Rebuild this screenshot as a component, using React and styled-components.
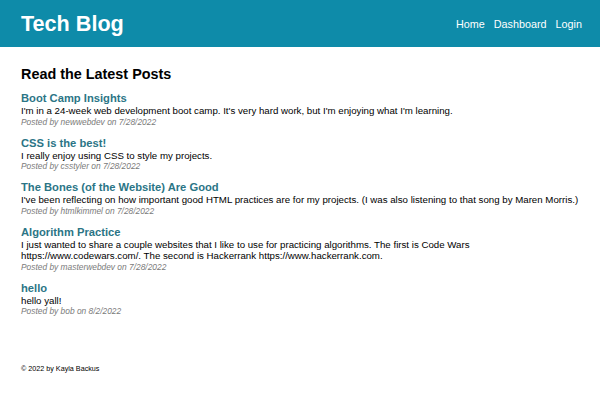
import React from 'react';
import styled, { createGlobalStyle } from 'styled-components';

const GlobalStyle = createGlobalStyle`
  html, body {
    margin: 0;
    padding: 0;
    background: #ffffff;
  }

  body {
    font-family: 'Liberation Sans', Arial, Helvetica, sans-serif;
    color: #000000;
  }
`;

const Page = styled.div`
  width: 600px;
  height: 400px;
  display: flex;
  flex-direction: column;
`;

const Header = styled.header`
  height: 47px;
  background-color: #0e8ba9;

  display: flex;
  align-items: center;
  justify-content: space-between;

  padding: 0 18px 0 21px;
`;

const SiteTitle = styled.h1`
  margin: 0;
  color: #ffffff;
  font-size: 21.6px;
  font-weight: 700;
`;

const Nav = styled.nav`
  display: flex;
  gap: 9px;
`;

const NavLink = styled.a`
  color: #ffffff;
  font-size: 10.8px;
  text-decoration: none;
`;

const Main = styled.main`
  flex: 1;
  padding: 19px 21px 0;
`;

const Heading = styled.h2`
  margin: 0 0 10px;
  font-size: 14.4px;
  font-weight: 700;
`;

const PostList = styled.div`
  display: flex;
  flex-direction: column;
  gap: 8.5px;
`;

const Post = styled.article`
  display: flex;
  flex-direction: column;
`;

const PostTitle = styled.h3`
  margin: 0;
  font-size: 11.2px;
  line-height: 13px;
  font-weight: 700;
  color: #2b7586;
`;

const PostBody = styled.p`
  margin: 0;
  font-size: 9.7px;
  line-height: 11.5px;
`;

const PostMeta = styled.p`
  margin: 0;
  font-size: 8.4px;
  line-height: 11.5px;
  font-style: italic;
  color: #7a7a7a;
`;

const Footer = styled.footer`
  padding: 0 21px 27px;
  font-size: 7.2px;
`;

const posts = [
  {
    title: 'Boot Camp Insights',
    body: "I'm in a 24-week web development boot camp. It's very hard work, but I'm enjoying what I'm learning.",
    author: 'newwebdev',
    date: '7/28/2022',
  },
  {
    title: 'CSS is the best!',
    body: 'I really enjoy using CSS to style my projects.',
    author: 'csstyler',
    date: '7/28/2022',
  },
  {
    title: 'The Bones (of the Website) Are Good',
    body: "I've been reflecting on how important good HTML practices are for my projects. (I was also listening to that song by Maren Morris.)",
    author: 'htmlkimmel',
    date: '7/28/2022',
  },
  {
    title: 'Algorithm Practice',
    body: (
      <>
        I just wanted to share a couple websites that I like to use for practicing algorithms. The first is Code Wars
        <br />
        https://www.codewars.com/. The second is Hackerrank https://www.hackerrank.com.
      </>
    ),
    author: 'masterwebdev',
    date: '7/28/2022',
  },
  {
    title: 'hello',
    body: 'hello yall!',
    author: 'bob',
    date: '8/2/2022',
  },
];

export default function App() {
  return (
    <Page>
      <GlobalStyle />
      <Header>
        <SiteTitle>Tech Blog</SiteTitle>
        <Nav>
          <NavLink href="#">Home</NavLink>
          <NavLink href="#">Dashboard</NavLink>
          <NavLink href="#">Login</NavLink>
        </Nav>
      </Header>

      <Main>
        <Heading>Read the Latest Posts</Heading>
        <PostList>
          {posts.map((post, index) => (
            <Post key={index}>
              <PostTitle>{post.title}</PostTitle>
              <PostBody>{post.body}</PostBody>
              <PostMeta>
                Posted by {post.author} on {post.date}
              </PostMeta>
            </Post>
          ))}
        </PostList>
      </Main>

      <Footer>© 2022 by Kayla Backus</Footer>
    </Page>
  );
}
